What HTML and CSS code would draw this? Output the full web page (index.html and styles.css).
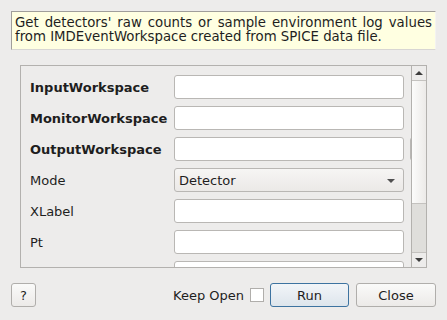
FILE: index.html
```html
<!DOCTYPE html>
<html lang="en">
<head>
  <meta charset="UTF-8">
  <title>Algorithm Dialog</title>
  <link rel="stylesheet" href="styles.css">
</head>
<body>
  <div class="dialog">
    <div class="description">
      Get detectors' raw counts or sample environment log values from IMDEventWorkspace created from SPICE data file.
    </div>

    <div class="scroll-area">
      <div class="scroll-content">
        <div class="prop-row">
          <label class="prop-label required">InputWorkspace</label>
          <input class="prop-input" type="text">
        </div>
        <div class="prop-row">
          <label class="prop-label required">MonitorWorkspace</label>
          <input class="prop-input" type="text">
        </div>
        <div class="prop-row">
          <label class="prop-label required">OutputWorkspace</label>
          <input class="prop-input" type="text">
          <span class="browse-btn"></span>
        </div>
        <div class="prop-row">
          <label class="prop-label">Mode</label>
          <div class="combo">
            <span>Detector</span>
            <span class="combo-arrow"></span>
          </div>
        </div>
        <div class="prop-row">
          <label class="prop-label">XLabel</label>
          <input class="prop-input" type="text">
        </div>
        <div class="prop-row">
          <label class="prop-label">Pt</label>
          <input class="prop-input" type="text">
        </div>
        <div class="prop-row">
          <label class="prop-label"></label>
          <input class="prop-input" type="text">
        </div>
      </div>

      <div class="scrollbar">
        <div class="sb-arrow sb-up"><span class="tri-up"></span></div>
        <div class="sb-track">
          <div class="sb-handle"></div>
        </div>
        <div class="sb-arrow sb-down"><span class="tri-down"></span></div>
      </div>
    </div>

    <div class="button-bar">
      <button class="btn btn-help">?</button>
      <div class="spacer"></div>
      <label class="keep-open">Keep Open <span class="checkbox"></span></label>
      <button class="btn btn-run">Run</button>
      <button class="btn btn-close">Close</button>
    </div>
  </div>
</body>
</html>
```

FILE: styles.css
```css
body {
  margin: 0;
  background-color: #edeceb;
  font-family: 'DejaVu Sans', sans-serif;
  font-size: 13px;
  color: #1e1e1e;
}

.dialog {
  display: flex;
  flex-direction: column;
  width: 447px;
  height: 320px;
  padding: 11px 11px 0 11px;
  box-sizing: border-box;
}

.description {
  height: 39px;
  box-sizing: border-box;
  padding: 4px 3px 0 3px;
  background-color: #ffffe1;
  border-top: 1px solid #a09e9b;
  border-left: 1px solid #a09e9b;
  border-right: 1px solid #f4f3f1;
  border-bottom: 1px solid #d8d6d3;
  font-size: 13.3px;
  line-height: 14px;
  text-align: justify;
}

.scroll-area {
  display: flex;
  margin: 15px 9px 0 9px;
  height: 203px;
  box-sizing: border-box;
  border: 1px solid #b3b1ae;
}

.scroll-content {
  flex: 1;
  overflow: hidden;
  padding: 9px 0 0 9px;
  display: flex;
  flex-direction: column;
  gap: 7px;
}

.prop-row {
  display: flex;
  align-items: center;
  height: 24px;
  flex-shrink: 0;
}

.prop-label {
  width: 144px;
  flex-shrink: 0;
}

.required {
  font-weight: bold;
}

.prop-input {
  width: 230px;
  height: 24px;
  box-sizing: border-box;
  margin: 0;
  border: 1px solid #b9b7b4;
  border-radius: 3px;
  background: #fff;
  flex-shrink: 0;
}

.browse-btn {
  margin-left: 6px;
  width: 30px;
  height: 24px;
  box-sizing: border-box;
  flex-shrink: 0;
  border: 1px solid #b9b7b4;
  border-radius: 3px;
  background: #f3f2f0;
}

.combo {
  width: 230px;
  height: 24px;
  box-sizing: border-box;
  display: flex;
  align-items: center;
  justify-content: space-between;
  padding: 0 8px 0 4px;
  border: 1px solid #b9b7b4;
  border-radius: 3px;
  background: linear-gradient(#f6f5f4, #ebe9e7);
  flex-shrink: 0;
}

.combo-arrow {
  width: 0;
  height: 0;
  border-left: 4px solid transparent;
  border-right: 4px solid transparent;
  border-top: 4px solid #505050;
  margin-top: 2px;
}

.scrollbar {
  width: 14px;
  display: flex;
  flex-direction: column;
  border-left: 1px solid #b3b1ae;
}

.sb-arrow {
  height: 14px;
  display: flex;
  align-items: center;
  justify-content: center;
  background: #edeceb;
}

.sb-up {
  border-bottom: 1px solid #c4c2bf;
}

.sb-down {
  border-top: 1px solid #c4c2bf;
}

.tri-up {
  border-left: 4px solid transparent;
  border-right: 4px solid transparent;
  border-bottom: 4px solid #3c3c3c;
}

.tri-down {
  border-left: 4px solid transparent;
  border-right: 4px solid transparent;
  border-top: 4px solid #3c3c3c;
}

.sb-track {
  flex: 1;
  background: #dfdedb;
}

.sb-handle {
  height: 122px;
  background: linear-gradient(to right, #fcfcfb, #eceae8);
  border-bottom: 1px solid #c4c2bf;
}

.button-bar {
  display: flex;
  align-items: center;
  margin-top: 15px;
  height: 24px;
}

.spacer {
  flex: 1;
}

.btn {
  height: 24px;
  box-sizing: border-box;
  border: 1px solid #b0aeab;
  border-radius: 3px;
  background: linear-gradient(#fafaf9, #eceae8);
  font-family: 'DejaVu Sans', sans-serif;
  font-size: 13px;
  color: #1e1e1e;
  padding: 0;
}

.btn-help {
  width: 25px;
}

.btn-run {
  width: 79px;
  margin-left: 6px;
  border-color: #3d73a0;
  background: linear-gradient(#f2f5f8, #dde5ec);
}

.btn-close {
  width: 80px;
  margin-left: 7px;
}

.keep-open {
  display: flex;
  align-items: center;
  gap: 6px;
}

.checkbox {
  width: 14px;
  height: 14px;
  box-sizing: border-box;
  border: 1px solid #b0aeab;
  background: #fff;
}
```
